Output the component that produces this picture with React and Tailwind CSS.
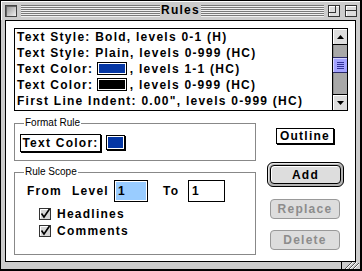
import React from "react";

const sysFont = "font-['Liberation_Sans',Arial,sans-serif]";
const chicago = "text-[12px] font-bold tracking-[1.25px]";

function Swatch({ color }) {
  return (
    <span className="mr-[3px] ml-[-1px] inline-block h-[13px] w-[30px] border border-black bg-white p-[1px] align-[-2px]">
      <span className="block h-full w-full" style={{ backgroundColor: color }} />
    </span>
  );
}

function ListRow({ children }) {
  return <div className="h-[16px] whitespace-nowrap pl-[2px] leading-[16px]">{children}</div>;
}

function Arrow({ up }) {
  return (
    <svg width="7" height="4" viewBox="0 0 7 4">
      <path d={up ? "M3.5 0L7 4H0Z" : "M0 0H7L3.5 4Z"} fill="#000" />
    </svg>
  );
}

function Scrollbar() {
  return (
    <div className="flex w-[15px] flex-col border-l border-black">
      <div className="flex h-[16px] items-center justify-center border-b border-black bg-[#dddddd] shadow-[inset_1px_1px_0_#ffffff]">
        <Arrow up />
      </div>
      <div className="flex-1 bg-[#a8a8a8] shadow-[inset_1px_0_0_#8c8c8c]">
        <div className="mt-[12px] flex h-[16px] flex-col items-center justify-center gap-[1px] border-y border-[#2a2a6a] bg-[#a4a4ff] shadow-[inset_1px_1px_0_#d4d4ff]">
          <div className="h-[1px] w-[7px] bg-[#333399]" />
          <div className="h-[1px] w-[7px] bg-[#333399]" />
          <div className="h-[1px] w-[7px] bg-[#333399]" />
          <div className="h-[1px] w-[7px] bg-[#333399]" />
        </div>
      </div>
      <div className="flex h-[16px] items-center justify-center border-t border-black bg-[#dddddd] shadow-[inset_1px_1px_0_#ffffff]">
        <Arrow />
      </div>
    </div>
  );
}

function GroupBox({ label, className, children }) {
  return (
    <div className={`relative border border-[#888888] ${className}`}>
      <span className="absolute -top-[7px] left-[9px] bg-white px-[1px] text-[10px] leading-[12px] text-black">{label}</span>
      {children}
    </div>
  );
}

function CheckBox({ label }) {
  return (
    <div className="flex h-[17px] items-center">
      <svg width="12" height="12" viewBox="0 0 12 12" className="ml-[24px]">
        <rect x="0.5" y="0.5" width="11" height="11" fill="#d6d6d6" stroke="#333333" />
        <path d="M1.5 10.5V1.5H10.5" stroke="#ffffff" fill="none" />
        <path d="M2.5 5.5L5 9L10.5 1" stroke="#000000" strokeWidth="1.6" fill="none" />
      </svg>
      <span className={`ml-[6px] ${chicago}`}>{label}</span>
    </div>
  );
}

function TitleBar() {
  const stripes = "h-[12px] bg-[repeating-linear-gradient(#7a7a7a_0px,#7a7a7a_1px,#f0f0f0_1px,#f0f0f0_2px)]";
  return (
    <div className="flex h-[19px] items-center bg-[#cccccc] pl-[4px] pr-[3px] shadow-[inset_1px_1px_0_#ffffff]">
      <div className="h-[12px] w-[12px] border border-[#444444] bg-[linear-gradient(135deg,#8e8e8e,#f2f2f2)] shadow-[inset_1px_1px_0_#666666]" />
      <div className={`ml-[4px] w-[139px] ${stripes}`} />
      <div className={`w-[41px] text-center leading-[19px] ${chicago}`}>Rules</div>
      <div className={`w-[123px] ${stripes}`} />
      <div className="ml-[4px] h-[12px] w-[12px] border border-[#333333] bg-[#dcdcdc] shadow-[inset_1px_1px_0_#ffffff]">
        <div className="h-[7px] w-[7px] border-r border-b border-[#333333]" />
      </div>
      <div className="ml-[5px] flex h-[12px] w-[12px] flex-col justify-center border border-[#333333] bg-[#dcdcdc] shadow-[inset_1px_1px_0_#ffffff]">
        <div className="h-[1px] w-full bg-[#333333]" />
      </div>
    </div>
  );
}

function GrowBox() {
  return (
    <svg width="19" height="7" viewBox="0 0 19 7" className="absolute bottom-0 right-0">
      <path d="M0.5 0V7" stroke="#000000" />
      <path d="M4 7L11 0M8 7L15 0M12 7L18 1" stroke="#555555" />
      <path d="M5 7L12 0M9 7L16 0M13 7L18 2" stroke="#ffffff" />
    </svg>
  );
}

export default function App() {
  return (
    <div className={`h-[271px] w-[362px] text-black ${sysFont}`}>
      <div className="relative flex h-full w-full flex-col border-t border-r-2 border-b-2 border-l border-black bg-[#cccccc]">
        <TitleBar />
        <div className="mx-[4px] flex-1 border border-black bg-white pt-[7px] pr-[7px] pl-[8px]">
          <div className={`flex h-[83px] border border-black ${chicago}`}>
            <div className="flex-1 overflow-hidden">
              <ListRow>Text Style: Bold, levels 0-1 (H)</ListRow>
              <ListRow>Text Style: Plain, levels 0-999 (HC)</ListRow>
              <ListRow>
                Text Color: <Swatch color="#0436a4" />, levels 1-1 (HC)
              </ListRow>
              <ListRow>
                Text Color: <Swatch color="#000000" />, levels 0-999 (HC)
              </ListRow>
              <ListRow>First Line Indent: 0.00", levels 0-999 (HC)</ListRow>
            </div>
            <Scrollbar />
          </div>

          <div className="flex">
            <div className="w-[242px]">
              <GroupBox label="Format Rule" className="mt-[12px] h-[38px]">
                <div className="mt-[10px] ml-[5px] flex items-start">
                  <div className={`flex h-[18px] w-[81px] items-center justify-center border border-black bg-white shadow-[1px_1px_0_#000000] ${chicago}`}>
                    Text Color:
                  </div>
                  <div className="mt-[1px] ml-[5px] h-[15px] w-[19px] border border-black bg-white p-[1px] shadow-[1px_1px_0_#000000]">
                    <div className="h-full w-full bg-[#0436a4]" />
                  </div>
                </div>
              </GroupBox>

              <GroupBox label="Rule Scope" className="mt-[11px] h-[83px]">
                <div className={`mt-[7px] flex h-[22px] items-center pl-[12px] ${chicago}`}>
                  <span className="w-[45px]">From</span>
                  <span className="w-[42px]">Level</span>
                  <div className="h-[22px] w-[34px] border border-black bg-white p-[1px]">
                    <div className="h-full w-full bg-[#99ccff] pl-[2px] leading-[18px]">1</div>
                  </div>
                  <span className="ml-[15px] w-[25px]">To</span>
                  <div className="h-[22px] w-[37px] border border-black bg-white pl-[3px] leading-[20px]">1</div>
                </div>
                <div className="mt-[3px]">
                  <CheckBox label="Headlines" />
                  <CheckBox label="Comments" />
                </div>
              </GroupBox>
            </div>

            <div className={`flex flex-1 flex-col items-start ${chicago}`}>
              <div className="mt-[17px] ml-[20px] flex h-[16px] w-[58px] items-center justify-center border border-black bg-white shadow-[1px_1px_0_#000000]">
                Outline
              </div>
              <div className="mt-[18px] ml-[11px] h-[25px] w-[77px] rounded-[6px] border border-black bg-[#b4b4b4] p-[2px] shadow-[inset_1px_1px_0_#e6e6e6]">
                <div className="flex h-full w-full items-center justify-center rounded-[4px] border border-black bg-[#dddddd] shadow-[inset_1px_1px_0_#ffffff]">
                  Add
                </div>
              </div>
              <div className="mt-[12px] ml-[14px] flex h-[20px] w-[70px] items-center justify-center rounded-[4px] border border-[#999999] bg-[#dddddd] text-[#8c8c8c]">
                Replace
              </div>
              <div className="mt-[11px] ml-[14px] flex h-[20px] w-[70px] items-center justify-center rounded-[4px] border border-[#999999] bg-[#dddddd] text-[#8c8c8c]">
                Delete
              </div>
            </div>
          </div>
        </div>
        <div className="h-[7px]" />
        <GrowBox />
      </div>
    </div>
  );
}
